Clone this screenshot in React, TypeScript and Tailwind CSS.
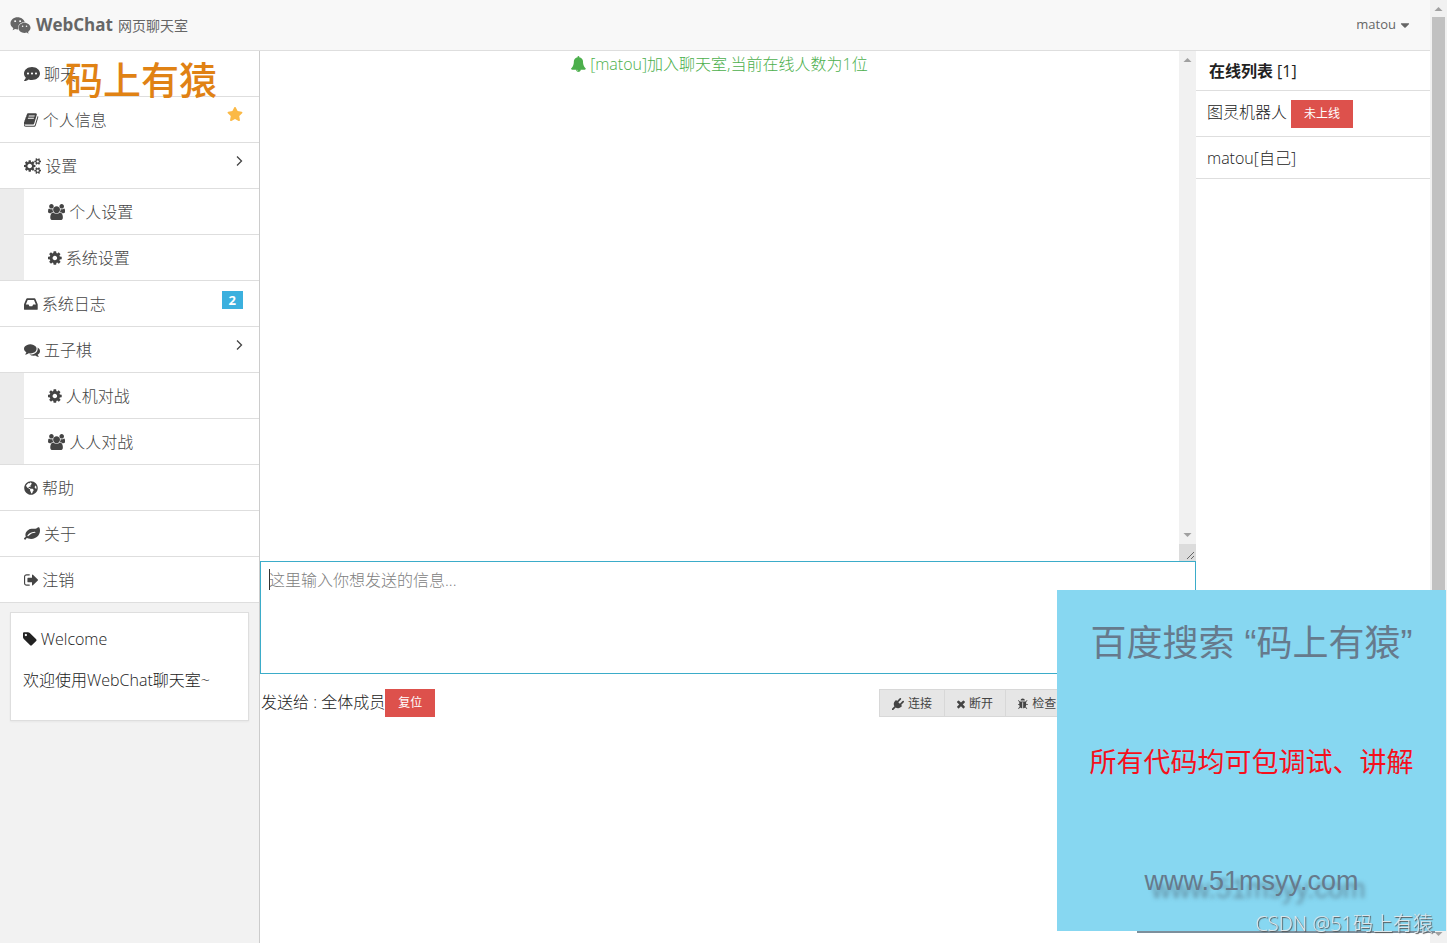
import React, { ReactNode } from 'react';
import { FaCaretDown, FaCommentDots, FaGlobeAmericas, FaStar, FaWeixin } from 'react-icons/fa';

const GLYPHS = {
  bell: {
    box: '64 0 1664 1792',
    d: 'M912 1696q0-16-16-16-59 0-101.500-42.500t-42.500-101.500q0-16-16-16t-16 16q0 73 51.500 124.500t124.500 51.500q16 0 16-16zm816-288q0 52-38 90t-90 38h-448q0 106-75 181t-181 75-181-75-75-181h-448q-52 0-90-38t-38-90q50-42 91-88t85-119.500 74.500-158.500 50-206 19.500-260q0-152 117-282.500t307-158.500q-8-19-8-39 0-40 28-68t68-28 68 28 28 68q0 20-8 39 190 28 307 158.500t117 282.500q0 139 19.500 260t50 206 74.500 158.500 85 119.500 91 88z',
  },
  leaf: {
    box: '0 0 1792 1792',
    d: 'M1280 704q0-26-19-45t-45-19q-172 0-318 49.500t-259.500 134-235.500 219.500q-19 21-19 45 0 26 19 45t45 19q24 0 45-19 27-24 74-71t67-66q137-124 268.500-176t313.500-52q26 0 45-19t19-45zm512-198q0 95-20 193-46 224-184.500 383t-357.500 268q-214 108-438 108-148 0-286-47-15-5-88-42t-96-37q-16 0-39.500 32t-45 70-52.500 70-60 32q-43 0-63.500-17.500t-45.500-59.500q-2-4-6-11t-5.500-10-3-9.500-1.500-13.500q0-35 31-73.500t68-65.500 68-56 31-48q0-4-14-38t-16-44q-9-51-9-104 0-115 43.500-220t119-184.500 170.500-139 204-95.500q55-18 145-25.500t179.500-9 178.500-6 163.500-24 113.500-56.500l29.500-29.500 29.500-28 27-20 36.500-16 43.500-4.500q39 0 70.500 46t47.500 112 24 124 8 96z',
  },
  book: {
    box: '64 0 1664 1792',
    d: 'M1639 478q40 57 18 129l-275 906q-19 64-76.5 107.5t-122.5 43.5h-923q-77 0-148.500-53.5t-99.500-131.5q-24-67-2-127 0-4 3-27t4-37q1-8-3-21.500t-3-19.500q2-11 8-21t16.500-23.500 16.500-23.500q23-38 45-91.500t30-91.500q3-10 .5-30t-.5-28q3-11 17-28t17-23q21-36 42-92t25-90q1-9-2.500-32t.5-28q4-13 22-30.500t22-22.500q19-26 42.500-84.500t27.500-96.500q1-8-3-25.500t-2-26.500q2-8 9-18t18-23 17-21q8-12 16.500-30.500t15-35 16-36 19.500-32 26.500-23.500 36-11.500 47.500 5.500l-1 3q38-9 51-9h761q74 0 114 56t18 130l-274 906q-36 119-71.500 153.500t-128.500 34.500h-869q-27 0-38 15-11 16-1 43 24 70 144 70h923q29 0 56-15.500t35-41.500l300-987q7-22 5-57 38 15 59 43zm-1064 2q-4 13 2 22.500t20 9.500h608q13 0 25.500-9.500t16.500-22.500l21-64q4-13-2-22.500t-20-9.500h-608q-13 0-25.500 9.500t-16.500 22.500zm-83 256q-4 13 2 22.500t20 9.500h608q13 0 25.500-9.500t16.500-22.500l21-64q4-13-2-22.500t-20-9.500h-608q-13 0-25.500 9.500t-16.500 22.500z',
  },
  cog: {
    box: '128 0 1536 1792',
    d: 'M1152 896q0-106-75-181t-181-75-181 75-75 181 75 181 181 75 181-75 75-181zm512-109v222q0 12-8 23t-20 13l-185 28q-19 54-39 91 35 50 107 138 10 12 10 25t-9 23q-27 37-99 108t-94 71q-12 0-26-9l-138-108q-44 23-91 38-16 136-29 186-7 28-36 28h-222q-14 0-24.500-8.500t-11.500-21.500l-28-184q-49-16-90-37l-141 107q-10 9-25 9-14 0-25-11-126-114-165-168-7-10-7-23 0-12 8-23 15-21 51-66.500t54-70.500q-27-50-41-99l-183-27q-13-2-21-12.500t-8-23.500v-222q0-12 8-23t19-13l186-28q14-46 39-92-40-57-107-138-10-12-10-24 0-10 9-23 26-36 98.500-107.500t94.500-71.500q13 0 26 10l138 107q44-23 91-38 16-136 29-186 7-28 36-28h222q14 0 24.500 8.500t11.500 21.500l28 184q49 16 90 37l142-107q9-9 24-9 13 0 25 10 129 119 165 170 7 8 7 22 0 12-8 23-15 21-51 66.500t-54 70.500q26 50 41 98l183 28q13 2 21 12.500t8 23.500z',
  },
  cogs: {
    box: '0 0 1920 1792',
    d: 'M896 896q0-106-75-181t-181-75-181 75-75 181 75 181 181 75 181-75 75-181zm768 512q0-52-38-90t-90-38-90 38-38 90q0 53 37.500 90.500t90.500 37.500 90.500-37.500 37.500-90.500zm0-1024q0-52-38-90t-90-38-90 38-38 90q0 53 37.500 90.500t90.500 37.500 90.500-37.500 37.500-90.500zm-384 421v185q0 10-7 19.500t-16 10.500l-155 24q-11 35-32 76 34 48 90 115 7 11 7 20 0 12-7 19-23 30-82.5 89.500t-78.5 59.500q-11 0-21-7l-115-90q-37 19-77 31-11 108-23 155-7 24-30 24h-186q-11 0-20-7.500t-10-17.500l-23-153q-34-10-75-31l-118 89q-7 7-20 7-11 0-21-8-144-133-144-160 0-9 7-19 10-14 41-53t47-61q-23-44-35-82l-152-24q-10-1-17-9.500t-7-19.500v-185q0-10 7-19.500t16-10.500l155-24q11-35 32-76-34-48-90-115-7-11-7-20 0-12 7-20 22-30 82-89t79-59q11 0 21 7l115 90q34-18 77-32 11-108 23-154 7-24 30-24h186q11 0 20 7.500t10 17.500l23 153q34 10 75 31l118-89q8-7 20-7 11 0 21 8 144 133 144 160 0 8-7 19-12 16-42 54t-45 60q23 48 34 82l152 23q10 2 17 10.500t7 19.500zm640 533v140q0 16-149 31-12 27-30 52 51 113 51 138 0 4-4 7-122 71-124 71-8 0-46-47t-52-68q-20 2-30 2t-30-2q-14 21-52 68t-46 47q-2 0-124-71-4-3-4-7 0-25 51-138-18-25-30-52-149-15-149-31v-140q0-16 149-31 13-29 30-52-51-113-51-138 0-4 4-7 4-2 35-20t59-34 30-16q8 0 46 46.500t52 67.500q20-2 30-2t30 2q51-71 92-112l6-2q4 0 124 70 4 3 4 7 0 25-51 138 17 23 30 52 149 15 149 31zm0-1024v140q0 16-149 31-12 27-30 52 51 113 51 138 0 4-4 7-122 71-124 71-8 0-46-47t-52-68q-20 2-30 2t-30-2q-14 21-52 68t-46 47q-2 0-124-71-4-3-4-7 0-25 51-138-18-25-30-52-149-15-149-31v-140q0-16 149-31 13-29 30-52-51-113-51-138 0-4 4-7 4-2 35-20t59-34 30-16q8 0 46 46.500t52 67.500q20-2 30-2t30 2q51-71 92-112l6-2q4 0 124 70 4 3 4 7 0 25-51 138 17 23 30 52 149 15 149 31z',
  },
  users: {
    box: '0 0 1920 1792',
    d: 'M593 896q-162 5-265 128h-134q-82 0-138-40.500t-56-118.500q0-353 124-353 6 0 43.500 21t97.500 42.500 119 21.500q67 0 133-23-5 37-5 66 0 139 81 256zm1071 637q0 120-73 189.500t-194 69.500h-874q-121 0-194-69.500t-73-189.500q0-53 3.500-103.500t14-109 26.500-108.500 43-97.500 62-81 85.500-53.500 111.500-20q10 0 43 21.500t73 48 107 48 135 21.500 135-21.500 107-48 73-48 43-21.500q61 0 111.500 20t85.500 53.500 62 81 43 97.500 26.500 108.500 14 109 3.500 103.500zm-1024-1277q0 106-75 181t-181 75-181-75-75-181 75-181 181-75 181 75 75 181zm704 384q0 159-112.500 271.500t-271.500 112.500-271.500-112.500-112.500-271.500 112.500-271.500 271.500-112.500 271.500 112.500 112.500 271.500zm576 225q0 78-56 118.500t-138 40.500h-134q-103-123-265-128 81-117 81-256 0-29-5-66 66 23 133 23 59 0 119-21.500t97.500-42.500 43.500-21q124 0 124 353zm-128-609q0 106-75 181t-181 75-181-75-75-181 75-181 181-75 181 75 75 181z',
  },
  inbox: {
    box: '128 0 1536 1792',
    d: 'M1151 960h316q-1-3-2.500-8.500t-2.500-7.500l-212-496h-708l-212 496q-1 3-2.500 8.500t-2.500 7.500h316l95 192h320zm513 30v482q0 26-19 45t-45 19h-1408q-26 0-45-19t-19-45v-482q0-62 25-123l238-552q10-25 36.500-42t52.500-17h832q26 0 52.500 17t36.500 42l238 552q25 61 25 123z',
  },
  comments: {
    box: '0 0 1792 1792',
    d: 'M1408 768q0 139-94 257t-256.500 186.500-353.500 68.500q-86 0-176-16-124 88-278 128-36 9-86 16h-3q-11 0-20.500-8t-11.500-21q-1-3-1-6.500t.5-6.500 2-6l2.500-5 3.500-5.500 4-5 4.500-5 4-4.500q5-6 23-25t26-29.500 22.500-29 25-38.500 20.500-44q-124-72-195-177t-71-224q0-139 94-257t256.500-186.500 353.500-68.500 353.500 68.500 256.500 186.500 94 257zm384 256q0 120-71 224.500t-195 176.500q10 24 20.500 44t25 38.500 22.500 29 26 29.500 23 25q1 1 4 4.500t4.500 5 4 5 3.500 5.500l2.500 5 2 6 .5 6.500-1 6.500q-3 14-13 22t-22 7q-50-7-86-16-154-40-278-128-90 16-176 16-271 0-472-132 58 4 88 4 161 0 309-45t264-129q125-92 192-212t67-254q0-77-23-152 129 71 204 178t75 230z',
  },
  signOut: {
    box: '64 0 1600 1792',
    d: 'M704 1440q0 4 1 20t.5 26.500-3 23.500-10 19.500-20.500 6.500h-320q-119 0-203.500-84.500t-84.500-203.500v-704q0-119 84.500-203.500t203.500-84.500h320q13 0 22.500 9.500t9.500 22.500q0 4 1 20t.5 26.500-3 23.500-10 19.500-20.500 6.500h-320q-66 0-113 47t-47 113v704q0 66 47 113t113 47h312l11.500 1 11.500 3 8 5.500 7 9 2 13.500zm928-544q0 26-19 45l-544 544q-19 19-45 19t-45-19-19-45v-288h-448q-26 0-45-19t-19-45v-384q0-26 19-45t45-19h448v-288q0-26 19-45t45-19 45 19l544 544q19 19 19 45z',
  },
  tag: {
    box: '128 0 1536 1792',
    d: 'M576 448q0-53-37.500-90.500t-90.500-37.500-90.500 37.500-37.500 90.500 37.500 90.500 90.500 37.500 90.500-37.500 37.500-90.500zm1067 576q0 53-37 90l-491 492q-39 37-91 37-53 0-90-37l-715-716q-38-37-64.500-101t-26.500-117v-416q0-52 38-90t90-38h416q53 0 117 26.500t102 64.500l715 714q37 39 37 91z',
  },
  plug: {
    box: '0 0 1792 1792',
    d: 'M1755 453q37 38 37 90.5t-37 90.5l-401 400 150 150-160 160q-163 163-389.500 186.500t-411.500-100.500l-362 362h-181v-181l362-362q-124-185-100.500-411.500t186.500-389.500l160-160 150 150 400-401q38-37 91-37t90 37 37 90.500-37 90.500l-400 401 234 234 401-400q38-37 91-37t90 37z',
  },
  times: {
    box: '302 0 1188 1792',
    d: 'M1490 1322q0 40-28 68l-136 136q-28 28-68 28t-68-28l-294-294-294 294q-28 28-68 28t-68-28l-136-136q-28-28-28-68t28-68l294-294-294-294q-28-28-28-68t28-68l136-136q28-28 68-28t68 28l294 294 294-294q28-28 68-28t68 28l136 136q28 28 28 68t-28 68l-294 294 294 294q28 28 28 68z',
  },
  bug: {
    box: '128 0 1536 1792',
    d: 'M1632 960q0 26-19 45t-45 19h-224q0 171-67 290l208 209q19 19 19 45t-19 45q-18 19-45 19t-45-19l-198-197q-5 5-15 13t-42 28.500-65 36.500-82 29-97 13v-896h-128v896q-51 0-101.500-13.500t-87-33-66-39-43.500-32.500l-15-14-183 207q-20 21-48 21-24 0-43-16-19-18-20.500-44.500t15.500-46.500l202-227q-58-114-58-274h-224q-26 0-45-19t-19-45 19-45 45-19h224v-294l-173-173q-19-19-19-45t19-45 45-19 45 19l173 173h844l173-173q19-19 45-19t45 19 19 45-19 45l-173 173v294h224q26 0 45 19t19 45zm-480-576h-640q0-133 93.500-226.500t226.500-93.500 226.500 93.500 93.500 226.500z',
  },
};

function Glyph({ name, className = 'h-4' }: { name: keyof typeof GLYPHS; className?: string }) {
  return (
    <svg className={`${className} w-auto shrink-0`} viewBox={GLYPHS[name].box} fill="currentColor" aria-hidden="true">
      <path d={GLYPHS[name].d} />
    </svg>
  );
}

interface NavItemProps {
  icon: ReactNode;
  label: string;
  extra?: ReactNode;
}

function NavItem({ icon, label, extra }: NavItemProps) {
  return (
    <li>
      <a href="#" className="flex h-[46px] items-center gap-1 border-b border-[#dedede] bg-white pr-4 pl-6 text-[#444]">
        {icon}
        <span>{label}</span>
        {extra && <span className="ml-auto pb-2">{extra}</span>}
      </a>
    </li>
  );
}

function SubNav({ children }: { children: ReactNode }) {
  return (
    <li className="border-b border-[#dedede] bg-[#ececec] pl-6">
      <ul className="-mb-px">{children}</ul>
    </li>
  );
}

function Chevron() {
  return (
    <svg className="mb-[2px] h-3 w-[7px]" viewBox="0 0 7 12" fill="none" stroke="currentColor" strokeWidth="1.300" aria-hidden="true">
      <path d="M1 1.500 5.500 6 1 10.500" />
    </svg>
  );
}

function Arrow({ up = false }: { up?: boolean }) {
  return (
    <svg className="h-[17px] w-[17px]" viewBox="0 0 17 17" fill="#a0a0a0" aria-hidden="true">
      <path d={up ? 'M4.500 11 8.500 7l4 4z' : 'M4.500 6l4 4 4-4z'} />
    </svg>
  );
}

function ToolButton({ icon, label }: { icon: ReactNode; label: string }) {
  return (
    <button className="-ml-px flex h-7 items-center gap-1 border border-[#d8d8d8] bg-[#e6e6e6] px-3 pt-px text-xs font-normal text-[#444]">
      {icon}
      {label}
    </button>
  );
}

export default function App() {
  return (
    <div className="flex min-h-screen bg-white font-['Open_Sans','Noto_Sans_CJK_SC',sans-serif] text-base font-light text-[#222]">
      <div className="flex min-w-0 flex-1 flex-col">
        <header className="flex h-[51px] items-center justify-between border-b border-[#dedede] bg-[#f8f8f8] pr-5 pl-[10px] text-[#666]">
          <div className="flex items-center gap-[5px]">
            <FaWeixin className="h-[21px] w-[21px]" />
            <strong className="text-[17px] leading-6 font-bold">WebChat</strong>
            <small className="pt-[2px] text-sm leading-6 font-normal">网页聊天室</small>
          </div>
          <button className="flex items-center gap-1 text-[13px] font-normal">
            matou
            <FaCaretDown className="h-3.5 w-2.5" />
          </button>
        </header>

        <div className="flex flex-1">
          <aside className="relative w-[260px] shrink-0 border-r border-[#ccc] bg-[#f2f2f2]">
            <nav>
              <ul>
                <NavItem icon={<FaCommentDots />} label="聊天" />
                <NavItem
                  icon={<Glyph name="book" />}
                  label="个人信息"
                  extra={<FaStar className="mb-1 h-4 w-4 text-[#fbb946]" />}
                />
                <NavItem icon={<Glyph name="cogs" />} label="设置" extra={<Chevron />} />
                <SubNav>
                  <NavItem icon={<Glyph name="users" />} label="个人设置" />
                  <NavItem icon={<Glyph name="cog" />} label="系统设置" />
                </SubNav>
                <NavItem
                  icon={<Glyph name="inbox" />}
                  label="系统日志"
                  extra={
                    <span className="block bg-[#3bb0de] px-[7px] text-[13px] leading-[18px] font-bold text-white">2</span>
                  }
                />
                <NavItem icon={<Glyph name="comments" />} label="五子棋" extra={<Chevron />} />
                <SubNav>
                  <NavItem icon={<Glyph name="cog" />} label="人机对战" />
                  <NavItem icon={<Glyph name="users" />} label="人人对战" />
                </SubNav>
                <NavItem icon={<FaGlobeAmericas className="h-3.5 w-3.5" />} label="帮助" />
                <NavItem icon={<Glyph name="leaf" />} label="关于" />
                <NavItem icon={<Glyph name="signOut" />} label="注销" />
              </ul>
            </nav>
            <section className="m-[10px] mt-[9px] border border-[#dedede] bg-white px-3 pt-[14px] pb-7 shadow-xs">
              <h2 className="flex items-center gap-1 leading-6">
                <Glyph name="tag" />
                Welcome
              </h2>
              <p className="mt-[17px] leading-6">欢迎使用WebChat聊天室~</p>
            </section>
            <div className="pointer-events-none absolute top-[6px] left-[65px] text-[38px] leading-[44px] font-medium text-[#e08214]">
              码上有猿
            </div>
          </aside>

          <main className="min-w-0 flex-1">
            <div className="flex h-[510px]">
              <div className="flex h-[26px] flex-1 items-center justify-center gap-1 text-[#4caf4c]">
                <Glyph name="bell" />
                <span>[matou]加入聊天室,当前在线人数为1位</span>
              </div>
              <div className="flex w-[17px] flex-col justify-between bg-[#f1f1f1]" aria-hidden="true">
                <Arrow up />
                <div>
                  <Arrow />
                  <svg className="h-[17px] w-[17px] bg-[#dcdcdc]" viewBox="0 0 17 17" stroke="#666">
                    <path d="M8 15l7-7M12 15l3-3" />
                  </svg>
                </div>
              </div>
            </div>
            <div className="relative">
              <textarea
                aria-label="消息"
                placeholder="这里输入你想发送的信息..."
                className="block h-[113px] w-full resize-none border border-[#3bacc9] p-2 leading-5 outline-none placeholder:text-[#808080]"
              />
              <span className="absolute top-2 left-[9px] h-[21px] w-px bg-[#333]" />
            </div>
            <div className="flex items-center justify-between pt-[15px]">
              <div className="flex items-start pl-[1px]">
                <span className="leading-[26px]">发送给 : 全体成员</span>
                <button className="h-7 bg-[#dd514c] px-[13px] text-xs font-normal text-white">复位</button>
              </div>
              <div className="flex w-[317px] pl-px">
                <ToolButton icon={<Glyph name="plug" className="h-3" />} label="连接" />
                <ToolButton icon={<Glyph name="times" className="h-3" />} label="断开" />
                <ToolButton icon={<Glyph name="bug" className="h-3" />} label="检查" />
              </div>
            </div>
          </main>

          <section className="w-[234px] shrink-0">
            <h2 className="flex h-10 items-center gap-1 border-b border-[#dedede] pl-[13px]">
              <b className="font-bold">在线列表</b>
              <span className="font-normal">[1]</span>
            </h2>
            <ul>
              <li className="flex h-[46px] items-center gap-1 border-b border-[#dedede] pl-[11px]">
                <span className="pb-1">图灵机器人</span>
                <button className="h-7 bg-[#dd514c] px-[13px] pt-px text-xs font-normal text-white">未上线</button>
              </li>
              <li className="flex h-[42px] items-center border-b border-[#dedede] pl-[11px]">matou[自己]</li>
            </ul>
          </section>
        </div>
      </div>

      <div className="flex w-[17px] shrink-0 flex-col bg-[#f1f1f1]" aria-hidden="true">
        <Arrow up />
        <div className="mx-[2px] flex-1 bg-[#c1c1c1]" />
        <div className="flex h-8 items-end">
          <Arrow />
        </div>
      </div>

      <div className="fixed right-px bottom-3 flex h-[341px] w-[389px] flex-col items-center bg-[#87d7f1] font-['Liberation_Sans','Noto_Sans_CJK_SC',sans-serif] font-normal text-[#667a8c]">
        <p className="mt-[29px] text-[36px] leading-[50px] whitespace-nowrap">百度搜索 “码上有猿”</p>
        <p className="mt-[74px] text-[27px] leading-[40px] whitespace-nowrap text-[#f5101c]">所有代码均可包调试、讲解</p>
        <a href="#" className="mt-20 text-[27px] leading-9 [text-shadow:7px_8px_4px_#4b5f7099]">
          www.51msyy.com
        </a>
      </div>
      <div className="fixed right-3 bottom-[10px] h-[2px] w-[298px] bg-[#7d8f9c]" />
      <div className="fixed right-[14px] bottom-[5px] text-[20px] leading-7 whitespace-nowrap text-[#dde6ea] [text-shadow:1px_1px_1px_#555]">
        CSDN @51码上有猿
      </div>
    </div>
  );
}
